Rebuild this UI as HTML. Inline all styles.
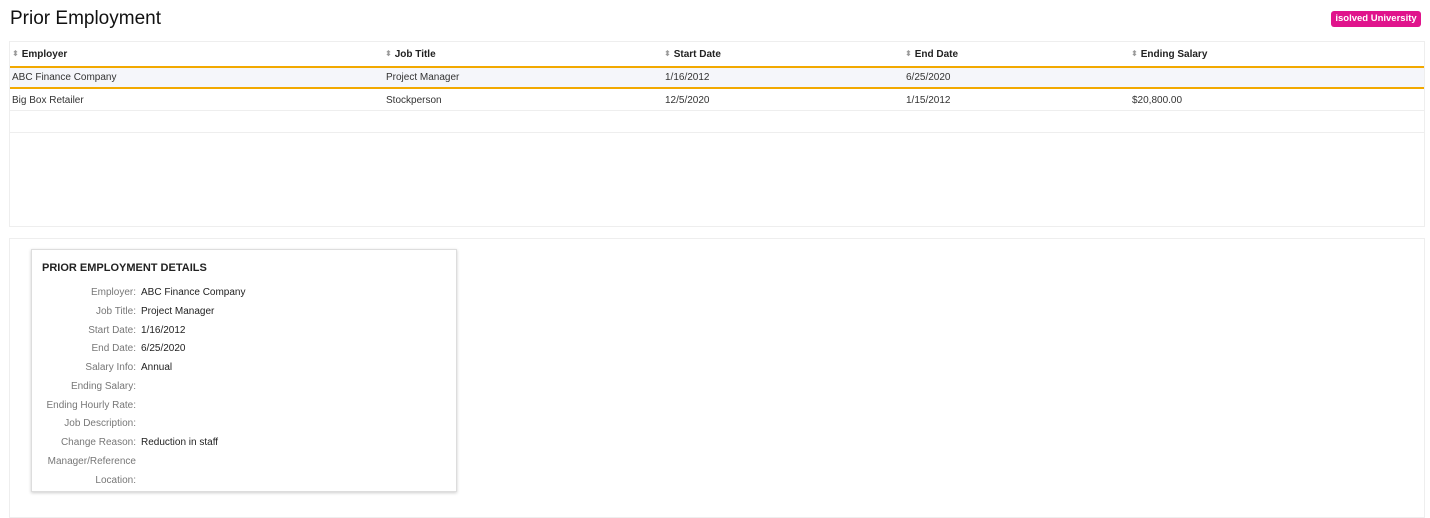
<!DOCTYPE html>
<html><head><style>
*{margin:0;padding:0;box-sizing:border-box}
body{width:1430px;height:505px;background:#fff;font-family:"Liberation Sans",Arial,sans-serif;color:#333;position:relative;overflow:hidden}
h1{position:absolute;left:10px;top:8px;font-size:19px;font-weight:normal;color:#111}
.badge{position:absolute;left:1331px;top:11px;width:90px;height:16px;background:#e0148c;color:#fff;font-size:9.5px;font-weight:bold;border-radius:3px;text-align:center;line-height:16px}
.tbl{position:absolute;left:9px;top:41px;width:1416px;height:186px;border:1px solid #eee}
.row{position:absolute;left:0;width:100%;height:22px;font-size:10px;line-height:22px}
.row span{position:absolute}
.hd{font-weight:bold;color:#222;top:0;height:24px;line-height:25px}
.hd span:before{content:"\2B0D";font-size:8px;color:#999;margin-right:3px;position:relative;top:-1px;font-family:"DejaVu Sans",sans-serif}
.sel{top:24px;background:#f5f6fa;border-top:2px solid #f2a900;border-bottom:2px solid #f2a900;height:23px;line-height:20px}
.r2{top:47px;border-bottom:1px solid #eee;line-height:23px}
.r3{top:69px;border-bottom:1px solid #eee;height:22px}
.p2{position:absolute;left:9px;top:238px;width:1416px;height:280px;border:1px solid #eee}
.card{position:absolute;left:31px;top:249px;width:426px;height:243px;border:1px solid #ddd;box-shadow:0 1px 3px rgba(0,0,0,.2);background:#fff}
.card h2{position:absolute;left:10px;top:12px;font-size:11px;font-weight:bold;color:#222}
.f{position:absolute;left:0;font-size:10px;height:18px;width:420px}
.f .l{position:absolute;right:316px;color:#777;white-space:nowrap}
.f .v{position:absolute;left:109px;color:#222}
</style></head><body>
<h1>Prior Employment</h1>
<div class="badge">isolved University</div>
<div class="tbl">
 <div class="row hd"><span style="left:2px">Employer</span><span style="left:375px">Job Title</span><span style="left:654px">Start Date</span><span style="left:895px">End Date</span><span style="left:1121px">Ending Salary</span></div>
 <div class="row sel"><span style="left:2px">ABC Finance Company</span><span style="left:376px">Project Manager</span><span style="left:655px">1/16/2012</span><span style="left:896px">6/25/2020</span></div>
 <div class="row r2"><span style="left:2px">Big Box Retailer</span><span style="left:376px">Stockperson</span><span style="left:655px">12/5/2020</span><span style="left:896px">1/15/2012</span><span style="left:1122px">$20,800.00</span></div>
 <div class="row r3"></div>
</div>
<div class="p2"></div>
<div class="card">
<h2>PRIOR EMPLOYMENT DETAILS</h2>
<div class="f" style="top:37px"><span class="l">Employer:</span><span class="v">ABC Finance Company</span></div>
<div class="f" style="top:56px"><span class="l">Job Title:</span><span class="v">Project Manager</span></div>
<div class="f" style="top:75px"><span class="l">Start Date:</span><span class="v">1/16/2012</span></div>
<div class="f" style="top:93px"><span class="l">End Date:</span><span class="v">6/25/2020</span></div>
<div class="f" style="top:112px"><span class="l">Salary Info:</span><span class="v">Annual</span></div>
<div class="f" style="top:131px"><span class="l">Ending Salary:</span></div>
<div class="f" style="top:150px"><span class="l">Ending Hourly Rate:</span></div>
<div class="f" style="top:168px"><span class="l">Job Description:</span></div>
<div class="f" style="top:187px"><span class="l">Change Reason:</span><span class="v">Reduction in staff</span></div>
<div class="f" style="top:206px"><span class="l">Manager/Reference</span></div>
<div class="f" style="top:225px"><span class="l">Location:</span></div>
</div>
</body></html>
